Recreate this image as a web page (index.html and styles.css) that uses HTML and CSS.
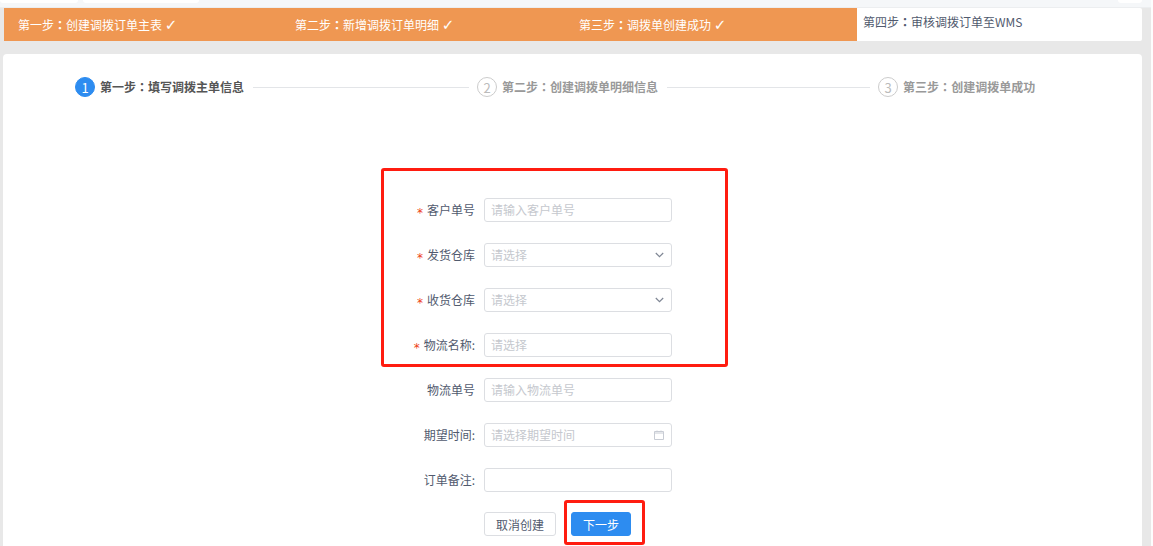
FILE: index.html
```html
<!DOCTYPE html>
<html lang="zh-CN">
<head>
<meta charset="utf-8">
<title>调拨单</title>
<link rel="stylesheet" href="styles.css">
</head>
<body>
<div class="topstrip">
  <div class="stub stub-a"></div>
  <div class="stub stub-b"></div>
  <div class="stub-spacer"></div>
  <div class="stub stub-c"></div>
</div>
<div class="banner">
  <div class="banner-step done s1"><span>第一步<span class="colon" lang="zh-TW">：</span>创建调拨订单主表 <span class="tick">✓</span></span></div>
  <div class="banner-step done s2"><span>第二步<span class="colon" lang="zh-TW">：</span>新增调拨订单明细 <span class="tick">✓</span></span></div>
  <div class="banner-step done s3"><span>第三步<span class="colon" lang="zh-TW">：</span>调拨单创建成功 <span class="tick">✓</span></span></div>
  <div class="banner-step todo"><span>第四步<span class="colon" lang="zh-TW">：</span>审核调拨订单至WMS</span></div>
</div>
<main class="card">
  <div class="steps">
    <div class="step active"><span class="num">1</span><span class="step-title">第一步<span class="colon" lang="zh-TW">：</span>填写调拨主单信息</span></div>
    <div class="line l1"></div>
    <div class="step"><span class="num">2</span><span class="step-title">第二步<span class="colon" lang="zh-TW">：</span>创建调拨单明细信息</span></div>
    <div class="line l2"></div>
    <div class="step"><span class="num">3</span><span class="step-title">第三步<span class="colon" lang="zh-TW">：</span>创建调拨单成功</span></div>
  </div>
  <form class="form">
    <div class="row"><label class="label"><i>*</i>客户单号</label><div class="field"><span class="ph">请输入客户单号</span></div></div>
    <div class="row"><label class="label"><i>*</i>发货仓库</label><div class="field"><span class="ph">请选择</span><svg class="ico" viewBox="0 0 9 6" width="9" height="6"><path d="M.8 1l3.7 3.7L8.2 1" fill="none" stroke="#7f8694" stroke-width="1.2"/></svg></div></div>
    <div class="row"><label class="label"><i>*</i>收货仓库</label><div class="field"><span class="ph">请选择</span><svg class="ico" viewBox="0 0 9 6" width="9" height="6"><path d="M.8 1l3.7 3.7L8.2 1" fill="none" stroke="#7f8694" stroke-width="1.2"/></svg></div></div>
    <div class="row"><label class="label"><i>*</i>物流名称:</label><div class="field"><span class="ph">请选择</span></div></div>
    <div class="row"><label class="label">物流单号</label><div class="field"><span class="ph">请输入物流单号</span></div></div>
    <div class="row"><label class="label">期望时间:</label><div class="field"><span class="ph">请选择期望时间</span><svg class="ico" viewBox="0 0 10 10" width="10" height="10"><path d="M.5 1.5h9v8h-9zM.5 3h9M3 .5v1.5M7 .5v1.5" fill="none" stroke="#c8ccd4" stroke-width="1"/></svg></div></div>
    <div class="row"><label class="label">订单备注:</label><div class="field"></div></div>
    <div class="actions">
      <button type="button" class="btn">取消创建</button>
      <button type="button" class="btn primary">下一步</button>
    </div>
  </form>
  <div class="mark mark-form"></div>
  <div class="mark mark-btn"></div>
</main>
<div class="edge"></div>
</body>
</html>
```
FILE: styles.css
```css
* { box-sizing: border-box; }
html, body { margin: 0; height: 546px; overflow: hidden; }
body {
  position: relative;
  background: #e8e8e8;
  font-family: "Noto Sans CJK SC", "Liberation Sans", sans-serif;
  font-size: 12px;
  color: #515a6e;
}
.edge { position: absolute; top: 0; right: 0; bottom: 0; width: 2px; background: #fdfdfd; }
.topstrip { height: 8px; background: #f5f7f9; display: flex; padding-right: 11px; border-bottom: 1px solid #eceef0; }
.stub { height: 3px; background: #fff; border-radius: 0 0 3px 3px; }
.stub-a { width: 78px; }
.stub-b { width: 116px; margin-left: 5px; }
.stub-spacer { flex: 1; }
.stub-c { width: 24px; }
.banner {
  height: 33px;
  margin: 0 11px 0 4px;
  display: flex;
  background: #fff;
  border-radius: 0 2px 2px 0;
}
.banner-step { display: flex; align-items: center; white-space: pre; }
.done { background: #ef9752; color: #fff; padding-bottom: 1px; }
.s1 { width: 277px; padding-left: 14px; }
.s2 { width: 284px; padding-left: 14px; }
.s3 { width: 292px; padding-left: 14px; }
.todo { flex: 1; padding: 0 0 6px 6px; color: #515a6e; }
.colon { font-family: "Noto Sans CJK TC", sans-serif; font-weight: 700; }
.tick { font-family: "DejaVu Sans", sans-serif; font-size: 15px; font-weight: 700; line-height: 12px; }
.card {
  position: relative;
  margin: 13px 11px 0 3px;
  height: 500px;
  background: #fff;
  border-radius: 4px;
}
.steps { display: flex; align-items: center; padding: 23px 0 0 72px; height: 43px; }
.step { display: flex; align-items: center; color: #999; font-weight: 700; white-space: nowrap; }
.step.active { color: #555; }
.step-title { padding-bottom: 2px; }
.num {
  width: 20px; height: 20px; margin-right: 5px;
  border: 1px solid #ccc; border-radius: 50%;
  display: flex; align-items: center; justify-content: center;
  font-weight: 400; font-size: 13px; color: #bbb;
}
.active .num { background: #2d8cf0; border-color: #2d8cf0; color: #fff; }
.line { height: 1px; background: #e3e5e8; margin: 0 8px 0 9px; }
.l1 { width: 216px; }
.l2 { width: 203px; }
.form { padding-top: 101px; }
.row { display: flex; align-items: center; height: 24px; margin-bottom: 21px; }
.label {
  width: 481px;
  padding: 0 9px 2px 0;
  text-align: right;
  color: #515a6e;
}
.label i { font-style: normal; color: #ed4014; margin-right: 4px; font-family: "DejaVu Sans", sans-serif; font-size: 12px; position: relative; top: 2px; }
.field {
  width: 188px; height: 24px;
  padding: 0 7px 0 6px;
  border: 1px solid #dcdee2; border-radius: 3px;
  display: flex; align-items: center; justify-content: space-between;
  background: #fff;
}
.ph { color: #c5c8ce; padding-bottom: 2px; }
.actions { display: flex; gap: 15px; padding-left: 481px; margin-top: -1px; }
.btn {
  height: 24px; width: 72px; padding: 0;
  font: inherit; color: #515a6e;
  background: #fff; border: 1px solid #dcdee2; border-radius: 3px;
}
.btn.primary { width: 60px; color: #fff; background: #2d8cf0; border-color: #2d8cf0; }
.mark { position: absolute; border: 3px solid #ff1c10; border-radius: 3px; }
.mark-form { left: 378px; top: 114px; width: 347px; height: 199px; }
.mark-btn { left: 561px; top: 446px; width: 81px; height: 45px; }
```
